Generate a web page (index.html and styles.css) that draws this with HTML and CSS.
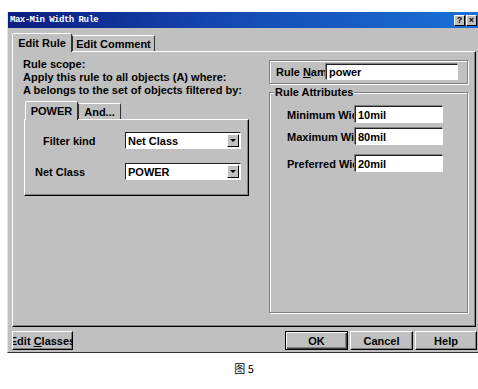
FILE: index.html
```html
<!DOCTYPE html>
<html>
<head>
<meta charset="utf-8">
<link rel="stylesheet" href="styles.css">
</head>
<body>
<div class="window">
  <div class="titlebar">
    <span class="title">Max-Min Width Rule</span>
    <div class="tb-btns"><span class="tb-btn">?</span><span class="tb-btn">×</span></div>
  </div>
  <div class="client">
    <div class="tabs">
      <div class="tab active tab-rule">Edit Rule</div>
      <div class="tab tab-comment">Edit Comment</div>
    </div>
    <div class="page">
      <div class="left">
        <p class="scope">Rule scope:<br>Apply this rule to all objects (A) where:<br>A belongs to the set of objects filtered by:</p>
        <div class="subtabs">
          <div class="tab active sub-power">POWER</div>
          <div class="tab sub-and">And...</div>
        </div>
        <div class="subpanel">
          <span class="lbl lbl-filter">Filter kind</span>
          <div class="select"><span class="sel-text">Net Class</span><span class="drop"><span class="arrow"></span></span></div>
          <span class="lbl lbl-net">Net Class</span>
          <div class="select"><span class="sel-text">POWER</span><span class="drop"><span class="arrow"></span></span></div>
        </div>
      </div>
      <div class="right">
        <div class="namebox">
          <span class="name-lbl">Rule <u>N</u>ame</span>
          <div class="input name-input">power</div>
        </div>
        <fieldset class="attrs">
          <legend>Rule Attributes</legend>
          <div class="attr-rows">
            <div class="attr-row"><span class="attr-lbl">Minimum Width</span><div class="input attr-input">10mil</div></div>
            <div class="attr-row"><span class="attr-lbl">Maximum Width</span><div class="input attr-input">80mil</div></div>
            <div class="attr-row pref"><span class="attr-lbl">Preferred Width</span><div class="input attr-input">20mil</div></div>
          </div>
        </fieldset>
      </div>
    </div>
    <div class="footer">
      <div class="btn btn-classes"><span>Edit <u>C</u>lasses</span></div>
      <div class="btn-group">
        <div class="btn default">OK</div>
        <div class="btn">Cancel</div>
        <div class="btn btn-help">Help</div>
      </div>
    </div>
  </div>
</div>
<div class="caption">图 5</div>
</body>
</html>
```
FILE: styles.css
```css
html, body {
  margin: 0;
  padding: 0;
  background: #fff;
}
body {
  font: bold 11px "Liberation Sans", Arial, sans-serif;
  color: #000;
}
.window {
  margin: 12px 0 0 7px;
  width: 471px;
  height: 341px;
  box-sizing: border-box;
  background: #c0c0c0;
  border-left: 1px solid #e4e4e4;
  border-bottom: 1px solid #303030;
  display: flex;
  flex-direction: column;
}
.titlebar {
  height: 16px;
  flex: none;
  background: linear-gradient(90deg, #0b1d80 0%, #1448b0 45%, #1a70d6 100%);
  display: flex;
  align-items: center;
  justify-content: space-between;
  padding: 0 1px 0 2px;
}
.title {
  font: bold 9px "Liberation Mono", monospace;
  color: #fff;
  letter-spacing: -0.5px;
}
.tb-btns {
  display: flex;
  gap: 1px;
}
.tb-btn {
  width: 11px;
  height: 11px;
  box-sizing: border-box;
  background: #c0c0c0;
  border: 1px solid;
  border-color: #fff #000 #000 #fff;
  font: bold 9px "Liberation Sans", Arial, sans-serif;
  line-height: 9px;
  display: flex;
  align-items: center;
  justify-content: center;
  color: #000;
}
.client {
  flex: 1;
  display: flex;
  flex-direction: column;
  padding: 5px 0 0 4px;
}
.tabs, .subtabs {
  display: flex;
  align-items: flex-end;
  height: 18px;
  position: relative;
  z-index: 1;
}
.tab {
  box-sizing: border-box;
  height: 16px;
  border: 1px solid;
  border-bottom: none;
  border-color: #fff #303030 transparent #fff;
  border-radius: 2px 2px 0 0;
  display: flex;
  align-items: center;
  justify-content: center;
  white-space: nowrap;
  background: #c0c0c0;
}
.tab.active {
  height: 19px;
  margin-bottom: -1px;
}
.tab-rule { width: 60px; }
.tab-comment { width: 83px; border-left-color: #303030; }
.page {
  width: 464px;
  height: 276px;
  box-sizing: border-box;
  border-top: 1px solid #fff;
  border-left: 1px solid #fff;
  border-right: 1px solid #000;
  border-bottom: 1px solid #000;
  box-shadow: inset -1px -1px 0 #808080;
  padding: 6px 0 0 10px;
  display: grid;
  grid-template-columns: 227px 199px;
  column-gap: 19px;
  align-items: start;
}
.scope {
  margin: 0;
  line-height: 13px;
  white-space: nowrap;
}
.subtabs {
  margin: 4px 0 0 2px;
}
.sub-power { width: 53px; }
.sub-and { width: 43px; border-left-color: #303030; }
.subpanel {
  margin-left: 1px;
  width: 225px;
  height: 77px;
  box-sizing: border-box;
  border: 1px solid;
  border-color: #fff #000 #000 #fff;
  box-shadow: inset -1px -1px 0 #808080;
  padding-top: 12px;
  display: grid;
  grid-template-columns: 100px 116px;
  grid-auto-rows: 17px;
  row-gap: 14px;
  align-items: center;
}
.lbl-filter { padding-left: 18px; }
.lbl-net { padding-left: 10px; }
.select {
  height: 17px;
  box-sizing: border-box;
  background: #fff;
  border: 1px solid;
  border-color: #202020 #fff #fff #202020;
  display: flex;
  align-items: center;
  justify-content: space-between;
}
.sel-text {
  padding-left: 2px;
}
.drop {
  width: 12px;
  height: 13px;
  margin-right: 1px;
  box-sizing: border-box;
  background: #c0c0c0;
  border: 1px solid;
  border-color: #fff #000 #000 #fff;
  display: flex;
  align-items: center;
  justify-content: center;
}
.arrow {
  width: 0;
  height: 0;
  border-left: 3px solid transparent;
  border-right: 3px solid transparent;
  border-top: 3px solid #000;
}
.right {
  margin-top: 2px;
  display: flex;
  flex-direction: column;
}
.namebox {
  height: 24px;
  box-sizing: border-box;
  border: 1px solid #808080;
  box-shadow: inset 1px 1px 0 #fff, 1px 1px 0 #fff;
  display: flex;
  align-items: center;
  padding-left: 6px;
}
.name-lbl {
  width: 50px;
  overflow: hidden;
  white-space: nowrap;
}
.input {
  box-sizing: border-box;
  background: #fff;
  border: 1px solid;
  border-color: #202020 #fff #fff #202020;
  box-shadow: -1px -1px 0 #808080;
  padding-left: 2px;
  display: flex;
  align-items: center;
  white-space: nowrap;
}
.name-input {
  width: 132px;
  height: 16px;
}
.attrs {
  margin: 2px 0 0;
  padding: 0;
  min-width: 0;
  height: 227px;
  box-sizing: border-box;
  border: 1px solid #808080;
  box-shadow: inset 1px 1px 0 #fff, 1px 1px 0 #fff;
}
.attrs legend {
  margin-left: 4px;
  padding: 0 1px;
  line-height: 13px;
  background: #c0c0c0;
}
.attr-rows {
  padding: 7px 0 0 17px;
  display: flex;
  flex-direction: column;
  gap: 5px;
}
.attr-row {
  display: flex;
  align-items: center;
  height: 17px;
}
.attr-row.pref {
  margin-top: 5px;
}
.attr-lbl {
  width: 68px;
  overflow: hidden;
  white-space: nowrap;
}
.attr-input {
  width: 88px;
  height: 17px;
}
.footer {
  margin-top: 4px;
  display: flex;
  padding-right: 1px;
}
.btn {
  box-sizing: border-box;
  height: 19px;
  width: 63px;
  background: #c0c0c0;
  border: 1px solid;
  border-color: #fff #000 #000 #fff;
  box-shadow: inset -1px -1px 0 #808080;
  display: flex;
  align-items: center;
  justify-content: center;
  white-space: nowrap;
  overflow: hidden;
}
.btn.default {
  border-color: #000;
  box-shadow: inset 1px 1px 0 #fff, inset -1px -1px 0 #404040, inset -2px -2px 0 #808080;
}
.btn-classes {
  width: 61px;
}
.btn-help { width: 62px; }
.btn-group {
  margin-left: auto;
  display: flex;
  gap: 2px;
}
.caption {
  margin-top: 8px;
  padding-left: 10px;
  text-align: center;
  font: 11px "Noto Sans CJK SC", "Liberation Sans", sans-serif;
  line-height: 14px;
}
```
